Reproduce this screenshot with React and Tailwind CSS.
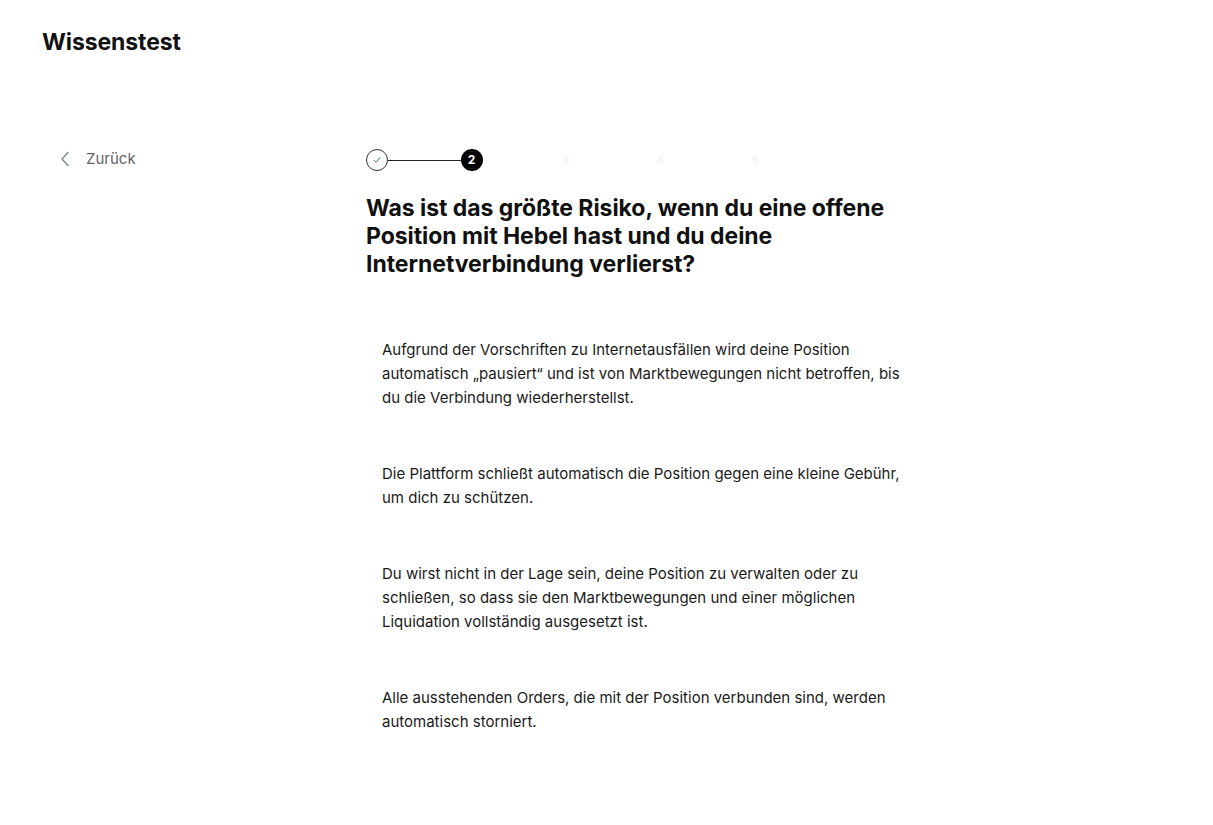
import React from "react";

const options = [
  "Aufgrund der Vorschriften zu Internetausfällen wird deine Position automatisch „pausiert“ und ist von Marktbewegungen nicht betroffen, bis du die Verbindung wiederherstellst.",
  "Die Plattform schließt automatisch die Position gegen eine kleine Gebühr, um dich zu schützen.",
  "Du wirst nicht in der Lage sein, deine Position zu verwalten oder zu schließen, so dass sie den Marktbewegungen und einer möglichen Liquidation vollständig ausgesetzt ist.",
  "Alle ausstehenden Orders, die mit der Position verbunden sind, werden automatisch storniert.",
];

function Stepper() {
  return (
    <div className="flex w-[400px] items-center">
      {/* done step */}
      <div className="flex h-[22px] w-[22px] shrink-0 items-center justify-center rounded-full border border-[#333]">
        <svg width="10" height="10" viewBox="0 0 10 10" fill="none">
          <path d="M2 5.3l2 2 4-4.6" stroke="#3a8a4a" strokeWidth="1" strokeLinecap="round" strokeLinejoin="round" />
        </svg>
      </div>
      <div className="h-px flex-1 bg-[#222]" />
      <div className="flex h-[22px] w-[22px] shrink-0 items-center justify-center rounded-full bg-black text-[12px] font-bold text-white">
        2
      </div>
      {[3, 4, 5].map((n) => (
        <React.Fragment key={n}>
          <div className="h-px flex-1" />
          <div className="flex h-[22px] w-[22px] shrink-0 items-center justify-center text-[11px] text-[#f0f0f0]">
            {n}
          </div>
        </React.Fragment>
      ))}
    </div>
  );
}

export default function App() {
  return (
    <div className="min-h-screen bg-white text-[#111] font-['Inter',sans-serif]">
      <header className="px-[42px] pt-[28px]">
        <h1 className="text-[23px] font-bold leading-[28px] tracking-[-0.1px]">Wissenstest</h1>
      </header>

      <main className="mt-[93px] flex">
        <div className="w-[366px] shrink-0 pl-[60px]">
          <button className="-mt-[3px] flex items-center gap-[16px] text-[15px] text-[#5f6368]">
            <svg width="10" height="16" viewBox="0 0 10 16" fill="none">
              <path d="M8 1.5L2 8l6 6.5" stroke="#7b8580" strokeWidth="1.3" strokeLinecap="round" strokeLinejoin="round" />
            </svg>
            <span className="leading-[26px]">Zurück</span>
          </button>
        </div>

        <div className="w-[546px]">
          <Stepper />
          <h2 className="mt-[23px] max-w-[540px] text-[23px] font-bold leading-[28px] tracking-[-0.05px]">
            Was ist das größte Risiko, wenn du eine offene Position mit Hebel hast und du deine Internetverbindung verlierst?
          </h2>

          <div className="mt-[44px] flex flex-col gap-[20px]">
            {options.map((text) => (
              <div key={text} className="py-4 pl-4 text-[15px] leading-[24px] text-[#1a1a1a]">
                {text}
              </div>
            ))}
          </div>
        </div>
      </main>
    </div>
  );
}
